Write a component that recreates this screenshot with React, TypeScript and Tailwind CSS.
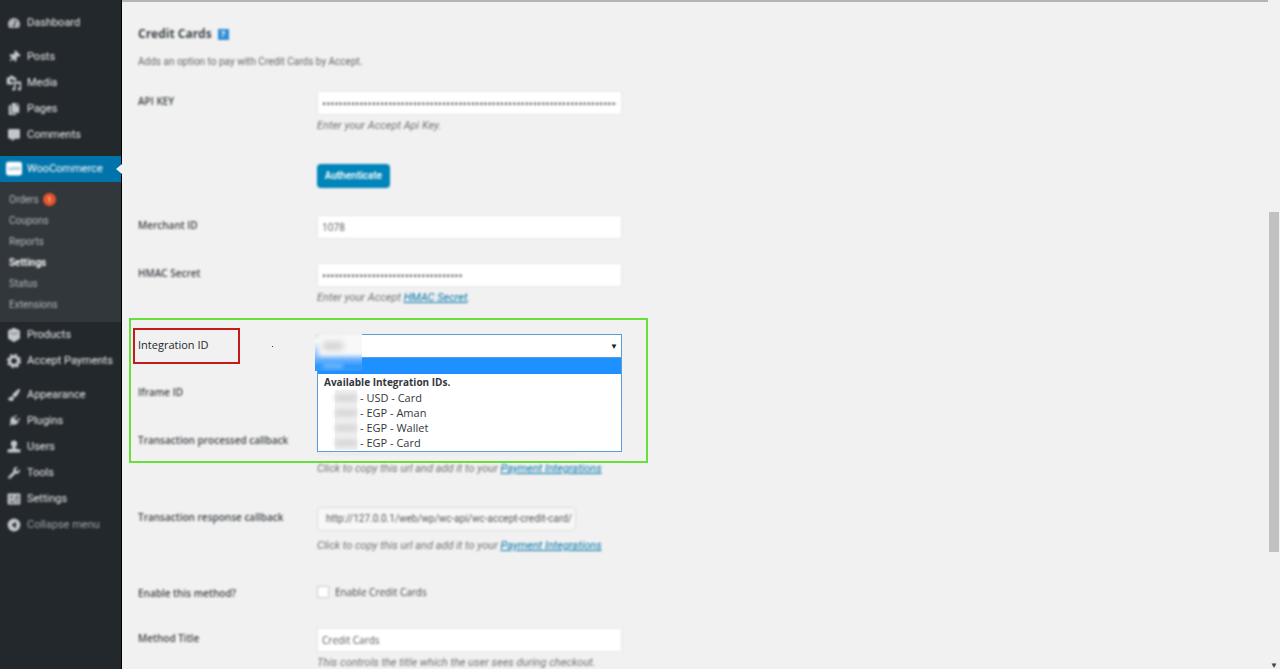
import React, { useState } from 'react';
import clsx from 'clsx';
import {
  FaTachometerAlt,
  FaThumbtack,
  FaCopy,
  FaCommentAlt,
  FaPaintBrush,
  FaPlug,
  FaWrench,
} from 'react-icons/fa';

const MediaIcon = () => (
  <svg viewBox="0 0 20 20" className="size-4" fill="currentColor">
    <path d="M2 3h2l1-2h4l1 2h2a1 1 0 0 1 1 1v3H9v5H2a1 1 0 0 1-1-1V4a1 1 0 0 1 1-1z" />
    <circle cx="7" cy="7" r="2" fill="#23282d" />
    <path d="M10 8h9v9.500a2.200 2 0 1 1-2-2V11h-5v6.500a2.200 2 0 1 1-2-2z" />
  </svg>
);

const ProductsIcon = () => (
  <svg viewBox="0 0 20 20" className="size-4" fill="currentColor">
    <path d="M10 1l7.500 3.500v10L10 19l-7.500-4.500v-10z" />
    <path d="M5 7l5 2 5-2" stroke="#5c6166" strokeWidth="1" fill="none" />
  </svg>
);

const GearIcon = () => (
  <svg viewBox="0 0 20 20" className="size-4" fill="none" stroke="currentColor">
    <circle cx="10" cy="10" r="5.500" strokeWidth="4" />
    <circle cx="10" cy="10" r="8" strokeWidth="2" strokeDasharray="3.140 3.140" />
  </svg>
);

const UsersIcon = () => (
  <svg viewBox="0 0 20 20" className="size-4" fill="currentColor">
    <circle cx="10" cy="6" r="4" />
    <path d="M8 9h4v3l6 1v4H2v-4l6-1z" />
  </svg>
);

const SlidersIcon = () => (
  <svg viewBox="0 0 20 20" className="size-4">
    <rect x="2" y="3" width="16" height="14" rx="1" fill="currentColor" />
    <path d="M5 7h4M12 7h4M5 10h2M10 10h6M5 13.500h6M13 13.500h3" stroke="#3a3f44" strokeWidth="1.500" />
  </svg>
);

const CollapseIcon = () => (
  <svg viewBox="0 0 20 20" className="size-4">
    <circle cx="10" cy="10" r="8" fill="currentColor" />
    <path d="M12.500 6v8L7 10z" fill="#23282d" />
  </svg>
);

const WooIcon = () => (
  <svg viewBox="0 0 20 20" className="size-4">
    <rect x="0" y="1" width="20" height="17" rx="3" fill="#fff" />
    <path d="M3 7l1.500 5L7 8l1 4 1.500-5M11 8h2v3h-2zM15 8h2v3h-2z" stroke="#8fb9d2" strokeWidth="1.200" fill="none" />
  </svg>
);

const TOP_ITEMS = [
  { label: 'Posts', icon: <FaThumbtack className="size-3 rotate-45" /> },
  { label: 'Media', icon: <MediaIcon /> },
  { label: 'Pages', icon: <FaCopy className="size-3" /> },
  { label: 'Comments', icon: <FaCommentAlt className="size-3" /> },
];

const SUB_ITEMS = ['Orders', 'Coupons', 'Reports', 'Settings', 'Status', 'Extensions'];

const SHOP_ITEMS = [
  { label: 'Products', icon: <ProductsIcon /> },
  { label: 'Accept Payments', icon: <GearIcon /> },
];

const ADMIN_ITEMS = [
  { label: 'Appearance', icon: <FaPaintBrush className="size-3" /> },
  { label: 'Plugins', icon: <FaPlug className="size-3 rotate-45" /> },
  { label: 'Users', icon: <UsersIcon /> },
  { label: 'Tools', icon: <FaWrench className="size-3" /> },
  { label: 'Settings', icon: <SlidersIcon /> },
];

const INTEGRATIONS = ['USD - Card', 'EGP - Aman', 'EGP - Wallet', 'EGP - Card'];

interface MenuItemProps {
  label: string;
  icon: React.ReactNode;
  muted?: boolean;
}

const MenuItem: React.FC<MenuItemProps> = ({ label, icon, muted }) => (
  <a href="#" className={clsx('flex h-[26px] items-center gap-[5px] pl-[6px] blur-[1px]', muted ? 'text-[#a0a5aa]' : 'text-[#eee]')}>
    <span className="flex w-4 shrink-0 justify-center text-[#c3c7cb]">{icon}</span>
    <span className="whitespace-nowrap">{label}</span>
  </a>
);

const Sidebar = () => (
  <nav className="w-[122px] shrink-0 border-r border-black bg-[#23282d] pt-[10px] font-['Roboto','Open_Sans',sans-serif]">
    <MenuItem label="Dashboard" icon={<FaTachometerAlt className="size-3" />} />
    <div className="pt-2">
      {TOP_ITEMS.map(item => <MenuItem key={item.label} {...item} />)}
    </div>
    <a href="#" className="relative mt-2 flex h-[26px] items-center bg-[#0073aa] text-white">
      <span className="flex items-center gap-[5px] pl-[6px] blur-[1px]">
        <WooIcon />
        <span>WooCommerce</span>
      </span>
      <span className="absolute top-2 -right-px size-0 border-y-[5px] border-r-[6px] border-y-transparent border-r-[#f1f1f1]" />
    </a>
    <div className="bg-[#32373c] py-[7px]">
      {SUB_ITEMS.map(label => (
        <a
          key={label}
          href="#"
          className={clsx('flex h-[21px] items-center gap-1 pl-[9px] text-[10px] blur-[1px]', label === 'Settings' ? 'font-semibold text-white' : 'text-[#b4b9be]')}
        >
          {label}
          {label === 'Orders' && (
            <span className="flex size-[13px] items-center justify-center rounded-full bg-[#e8562a] text-[8px] text-white">1</span>
          )}
        </a>
      ))}
    </div>
    {SHOP_ITEMS.map(item => <MenuItem key={item.label} {...item} />)}
    <div className="pt-2">
      {ADMIN_ITEMS.map(item => <MenuItem key={item.label} {...item} />)}
      <MenuItem label="Collapse menu" icon={<CollapseIcon />} muted />
    </div>
  </nav>
);

interface RowProps {
  label?: string;
  htmlFor?: string;
  className?: string;
  children: React.ReactNode;
}

const Row: React.FC<RowProps> = ({ label, htmlFor, className, children }) => (
  <div className={clsx('grid grid-cols-[179px_1fr] items-start', className)}>
    {label ? <label htmlFor={htmlFor} className="pt-px text-[10px] font-semibold text-[#3c4146] blur-[1px]">{label}</label> : <span />}
    <div className="flex flex-col items-start">{children}</div>
  </div>
);

const inputClass = 'h-6 w-[305px] border border-[#e8e8e8] bg-white px-1 text-[#555] blur-[1px]';
const urlClass = "h-6 w-[259px] rounded-sm border border-[#dcdcdc] bg-[#f7f7f7] px-2 text-left font-['Roboto','Open_Sans',sans-serif] text-[10px] whitespace-nowrap text-[#555] blur-[1px]";
const hintClass = "font-['Roboto','Open_Sans',sans-serif] leading-3 text-[#707070] italic blur-[1px]";
const CALLBACK_URL = 'http://127.0.0.1/web/wp/wc-api/wc-accept-credit-card/';

const CopyHint = () => (
  <p className={clsx('mt-[9px]', hintClass)}>
    Click to copy this url and add it to your <a href="#" className="text-[#0073aa] underline">Payment Integrations</a>
  </p>
);

const IntegrationRow = () => (
  <div className="relative mb-6 grid grid-cols-[179px_1fr] items-start">
    <label htmlFor="integration" className="pt-[2px] text-[#23282d]">Integration ID</label>
    <div className="relative w-[305px]">
      <select id="integration" className="block h-6 w-full appearance-none border border-[#5b9dd9] bg-white pl-2 text-transparent">
        <option>1078</option>
      </select>
      <span className="pointer-events-none absolute top-1 right-1 text-[8px] leading-4 text-[#222]">▼</span>
      <div role="listbox" aria-label="Integration ID" className="absolute top-6 left-0 z-10 w-full border border-t-0 border-[#5b9dd9] bg-white text-[#32373c]">
        <div role="option" aria-selected="true" className="h-4 bg-[#1e90ff]" />
        <div className="pl-[6px] text-[10px] leading-4 font-bold">Available Integration IDs.</div>
        {INTEGRATIONS.map(name => (
          <div key={name} role="option" aria-selected="false" className="flex h-[15px] items-center gap-[3px] pl-[17px]">
            <span className="flex h-full w-[22px] items-center bg-[#f0f0f0]">
              <span className="h-2 w-full bg-[#dadada] blur-[2px]" />
            </span>
            <span>- {name}</span>
          </div>
        ))}
        <div className="h-px" />
      </div>
      <div className="pointer-events-none absolute top-0 -left-[2px] z-20 h-[37px] w-[47px] overflow-hidden bg-linear-to-b from-[#dfe9f2] via-[#f8f8f8] via-20% to-[#2f98fb] to-85%">
        <div className="absolute top-0 left-1 h-[22px] w-full bg-[#f8f8f8] blur-[2px]" />
        <div className="absolute top-2 left-2 h-2 w-5 bg-[#d0d0d0] blur-[3px]" />
        <div className="absolute top-[30px] left-2 h-1 w-5 bg-[#7cbcff] blur-[2px]" />
      </div>
    </div>
    <span className="absolute top-3 left-[134px] size-px bg-[#333]" />
    <div className="pointer-events-none absolute -top-4 -left-[9px] z-20 h-[145px] w-[519px] border-2 border-[#67e03b]" />
    <div className="pointer-events-none absolute -top-[6px] -left-[5px] z-20 h-9 w-[107px] border-2 border-[#c41a1a]" />
  </div>
);

const SettingsForm = () => {
  const [title, setTitle] = useState('Credit Cards');
  const [enabled, setEnabled] = useState(false);

  return (
    <form className="min-w-0 flex-1 border-t-2 border-[#b4b4b4] pt-[22px] pl-4">
      <h2 className="flex items-center gap-[6px] text-[12px] leading-5 font-bold text-[#3c4146] blur-[1px]">
        Credit Cards
        <span className="flex size-[11px] items-center justify-center bg-[#2e8fd6] text-[9px] text-white">?</span>
      </h2>
      <p className="mt-[9px] mb-5 font-['Roboto','Open_Sans',sans-serif] text-[10px] text-[#666] blur-[1px]">Adds an option to pay with Credit Cards by Accept.</p>

      <Row label="API KEY" htmlFor="api-key" className="mb-8">
        <input id="api-key" type="password" className={clsx(inputClass, 'text-[11px]')} defaultValue={'x'.repeat(96)} />
        <p className={clsx('mt-[5px]', hintClass)}>Enter your Accept Api Key.</p>
      </Row>
      <Row className="mb-[27px]">
        <button type="button" className="h-6 w-[73px] rounded-sm bg-[#0085ba] font-['Roboto','Open_Sans',sans-serif] text-[10px] font-semibold text-white blur-[1px]">Authenticate</button>
      </Row>
      <Row label="Merchant ID" htmlFor="merchant" className="mb-6">
        <input id="merchant" className={clsx(inputClass, 'text-[10px]')} defaultValue="1078" />
      </Row>
      <Row label="HMAC Secret" htmlFor="hmac" className="mb-[30px]">
        <input id="hmac" type="password" className={clsx(inputClass, 'text-[11px]')} defaultValue={'x'.repeat(34)} />
        <p className={clsx('mt-[5px]', hintClass)}>
          Enter your Accept <a href="#" className="text-[#0073aa] underline">HMAC Secret</a>.
        </p>
      </Row>
      <IntegrationRow />
      <Row label="Iframe ID" htmlFor="iframe" className="mb-6">
        <input id="iframe" className={inputClass} />
      </Row>
      <Row label="Transaction processed callback" className="mb-8">
        <button type="button" aria-label="Copy processed callback" className={urlClass} />
        <CopyHint />
      </Row>
      <Row label="Transaction response callback" className="mb-[31px]">
        <button type="button" className={urlClass}>{CALLBACK_URL}</button>
        <CopyHint />
      </Row>
      <Row label="Enable this method?" htmlFor="enable" className="mb-[26px]">
        <label className="flex items-center gap-[6px] text-[10px] text-[#444] blur-[1px]">
          <input
            id="enable"
            type="checkbox"
            checked={enabled}
            onChange={e => setEnabled(e.target.checked)}
            className="size-3 appearance-none border border-[#ccc] bg-white checked:bg-[#0073aa]"
          />
          Enable Credit Cards
        </label>
      </Row>
      <Row label="Method Title" htmlFor="title">
        <input id="title" className={clsx(inputClass, 'text-[10px]')} value={title} onChange={e => setTitle(e.target.value)} />
        <p className={clsx('mt-[5px]', hintClass)}>This controls the title which the user sees during checkout.</p>
      </Row>
    </form>
  );
};

const App: React.FC = () => (
  <div className="flex h-screen overflow-hidden bg-[#f1f1f1] font-['Open_Sans','Noto_Sans',sans-serif] text-[11px] leading-[18px]">
    <Sidebar />
    <SettingsForm />
    <div className="flex w-3 shrink-0 flex-col items-center justify-between pt-[212px]">
      <div className="h-[340px] w-[10px] bg-[#c1c1c1]" />
      <span className="text-[8px] leading-2 text-[#444]">▼</span>
    </div>
  </div>
);

export default App;
